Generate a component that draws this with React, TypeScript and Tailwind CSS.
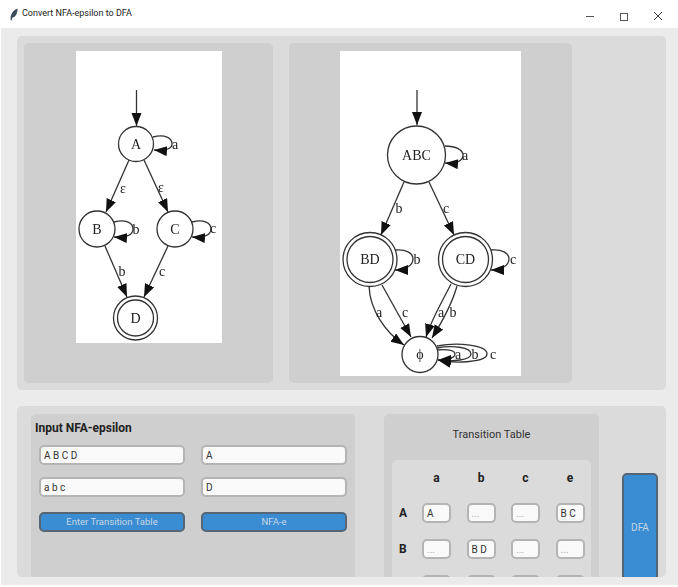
import React from "react";

const serif = { fontFamily: '"Liberation Serif", serif', fontSize: 14, fill: "#222" } as const;

function Defs() {
  return (
    <defs>
      <marker id="head" markerUnits="userSpaceOnUse" markerWidth="16" markerHeight="12" refX="13" refY="5" orient="auto">
        <path d="M0,0 L13,5 L0,10 Z" fill="#111" />
      </marker>
    </defs>
  );
}

function Label({ x, y, t }: { x: number; y: number; t: string }) {
  return (
    <text x={x} y={y} textAnchor="middle" dominantBaseline="central" style={serif}>
      {t}
    </text>
  );
}

function Node({ x, y, r, t, double }: { x: number; y: number; r: number; t: string; double?: number }) {
  return (
    <g>
      <circle cx={x} cy={y} r={r} fill="white" stroke="#333" strokeWidth="1.3" />
      {double ? <circle cx={x} cy={y} r={double} fill="none" stroke="#333" strokeWidth="1.3" /> : null}
      <Label x={x} y={y} t={t} />
    </g>
  );
}

function Edge({ d }: { d: string }) {
  return <path d={d} fill="none" stroke="#333" strokeWidth="1.3" markerEnd="url(#head)" />;
}

function NfaGraph() {
  return (
    <svg width="146" height="292" viewBox="76 51 146 292" className="block bg-white blur-[0.3px]">
      <Defs />
      <Edge d="M136.5,90 L136.5,126" />
      <Node x={136} y={144} r={17.5} t="A" />
      <Edge d="M153,137 C165,134 172,138 172,144 C172,149 165,151 154,150" />
      <Label x={175} y={144} t="a" />
      <Edge d="M129,160 L106,212" />
      <Edge d="M144,160 L168,212" />
      <Label x={123} y={188} t="ε" />
      <Label x={161} y={187} t="ε" />
      <Node x={97} y={229} r={18} t="B" />
      <Node x={175} y={229} r={18} t="C" />
      <Edge d="M114,222 C126,219 133,223 133,229 C133,235 126,238 114,237" />
      <Label x={136} y={229} t="b" />
      <Edge d="M192,222 C204,219 211,223 211,229 C211,235 204,238 192,237" />
      <Label x={213} y={228} t="c" />
      <Edge d="M105,246 L127,297" />
      <Edge d="M168,246 L144,297" />
      <Label x={122} y={271} t="b" />
      <Label x={162} y={271} t="c" />
      <Node x={135.5} y={318} r={22} double={18} t="D" />
    </svg>
  );
}

function DfaGraph() {
  return (
    <svg width="181" height="325" viewBox="340 51 181 325" className="block bg-white blur-[0.3px]">
      <Defs />
      <Edge d="M417,90 L417,125" />
      <Node x={416.5} y={155} r={29} t="ABC" />
      <Edge d="M445,146 C456,146 463,150 463,155 C463,161 456,164 445,163" />
      <Label x={465} y={155} t="a" />
      <Edge d="M404,182 L381,235" />
      <Edge d="M429,182 L454,235" />
      <Label x={399} y={208} t="b" />
      <Label x={446} y={208} t="c" />
      <Node x={370} y={259.5} r={27} double={23} t="BD" />
      <Node x={465.5} y={259.5} r={27} double={23} t="CD" />
      <Edge d="M395,250 C406,249 413,253 413,259 C413,265 406,270 395,270" />
      <Label x={417} y={259} t="b" />
      <Edge d="M491,250 C502,249 509,253 509,259 C509,265 502,270 491,270" />
      <Label x={513} y={259} t="c" />
      <Edge d="M369,286 C370,310 385,332 404,345" />
      <Edge d="M382,285 L411,337" />
      <Edge d="M451,284 C442,302 432,318 426,337" />
      <Edge d="M457,286 C452,304 442,322 432,338" />
      <Label x={379} y={312} t="a" />
      <Label x={405} y={312} t="c" />
      <Label x={441} y={312} t="a" />
      <Label x={453} y={312} t="b" />
      <Node x={420} y={354.5} r={18} t="ϕ" />
      <Edge d="M437,350 C446,349 455,350 455,354 C455,358 447,360 438,360" />
      <Edge d="M437,348 C452,345 471,347 471,354 C471,360 453,362 438,360" />
      <Edge d="M437,346 C458,342 487,345 487,354 C487,362 456,364 438,360" />
      <Label x={458} y={354} t="a" />
      <Label x={475} y={354} t="b" />
      <Label x={493} y={354} t="c" />
    </svg>
  );
}

function Field({ value }: { value: string }) {
  return (
    <div className="flex h-[20px] w-[146px] items-center rounded-[5px] border-2 border-[#b4b4b4] bg-[#f9f9f9] pl-[3px] text-[10px] text-[#333]">
      {value}
    </div>
  );
}

function Action({ label }: { label: string }) {
  return (
    <div className="flex h-[20px] w-[146px] items-center justify-center rounded-[5px] border-2 border-[#566674] bg-[#3a8dd3] text-[9.5px] text-[#c6d6e4]">
      {label}
    </div>
  );
}

function Cell({ value }: { value: string }) {
  const empty = value === "...";
  return (
    <div
      className={`flex h-[20px] w-[29px] items-center rounded-[5px] border-2 border-[#b4b4b4] bg-[#f9f9f9] pl-[3px] text-[10px] ${
        empty ? "text-[#aaaaaa]" : "text-[#333]"
      }`}
    >
      {value}
    </div>
  );
}

const rows = [
  { name: "A", cells: ["A", "...", "...", "B C"] },
  { name: "B", cells: ["...", "B D", "...", "..."] },
  { name: "", cells: ["", "", "", ""] },
];

export default function App() {
  return (
    <div
      className="flex h-[587px] w-[678px] flex-col overflow-hidden bg-white"
      style={{ fontFamily: 'Roboto, "Liberation Sans", sans-serif' }}
    >
      <header className="flex h-[28px] shrink-0 items-center pl-[10px]">
        <svg width="8" height="13" viewBox="0 0 8 13" className="mr-[4px]">
          <path d="M0.8,12.5 C0,8 1.5,3 7.5,0.5 C7.5,5 6,9 2.2,9.8 L1.6,12.5 Z" fill="#3d4a5c" />
        </svg>
        <span className="text-[9px] text-[#222]">Convert NFA-epsilon to DFA</span>
        <div className="ml-auto flex items-center">
          <svg width="12" height="12" viewBox="0 0 12 12" className="mr-[22px] overflow-visible">
            <path d="M2,8.5 H10" stroke="#555" strokeWidth="1" />
          </svg>
          <svg width="12" height="12" viewBox="0 0 12 12" className="mr-[22px] overflow-visible">
            <rect x="2.5" y="5.5" width="7" height="7" fill="none" stroke="#555" strokeWidth="1" />
          </svg>
          <svg width="12" height="12" viewBox="0 0 12 12" className="mr-[14px] overflow-visible">
            <path d="M2,4 L10,12 M10,4 L2,12" stroke="#444" strokeWidth="1" />
          </svg>
        </div>
      </header>

      <main className="ml-[1px] h-[557px] shrink-0 bg-[#ebebeb] pl-[16px] pt-[8px]">
        <section className="flex h-[354px] w-[649px] gap-[16px] rounded-[5px] bg-[#dbdbdb] p-[7px]">
          <div className="h-[340px] w-[249px] rounded-[5px] bg-[#cfcfcf] pl-[52px] pt-[8px]">
            <NfaGraph />
          </div>
          <div className="h-[340px] w-[283px] rounded-[5px] bg-[#cfcfcf] pl-[51px] pt-[8px]">
            <DfaGraph />
          </div>
        </section>

        <section className="mt-[16px] flex h-[171px] w-[649px] overflow-hidden rounded-[5px] bg-[#dbdbdb] pl-[14px] pt-[8px]">
          <div className="h-[230px] w-[324px] shrink-0 rounded-[5px] bg-[#cfcfcf] pt-[7px]">
            <h2 className="pl-[4px] text-[12px] font-bold leading-[14px] text-[#222]">Input NFA-epsilon</h2>
            <div className="mt-[10px] grid grid-cols-[146px_146px] gap-x-[16px] gap-y-[12px] pl-[8px]">
              <Field value="A B C D" />
              <Field value="A" />
              <Field value="a b c" />
              <Field value="D" />
            </div>
            <div className="mt-[15px] flex gap-[16px] pl-[8px]">
              <Action label="Enter Transition Table" />
              <Action label="NFA-e" />
            </div>
          </div>

          <div className="ml-[29px] h-[230px] w-[215px] shrink-0 rounded-[5px] bg-[#cfcfcf] px-[8px] pt-[14px]">
            <h2 className="text-center text-[11px] leading-[14px] text-[#333]">Transition Table</h2>
            <div className="mt-[18px] rounded-[5px] bg-[#dbdbdb] pb-[10px] pl-[30px] pt-[10px]">
              <div className="grid grid-cols-[repeat(4,29px)] gap-x-[15.5px] gap-y-[16px] text-[12px] font-bold text-[#222]">
                {["a", "b", "c", "e"].map((h) => (
                  <div key={h} className="h-[17px] text-center leading-[17px]">
                    {h}
                  </div>
                ))}
                {rows.map((r, ri) => (
                  <React.Fragment key={ri}>
                    {r.cells.map((c, i) => (
                      <div key={i} className="relative font-normal">
                        {i === 0 && r.name ? (
                          <span className="absolute left-[-23px] top-[2px] text-[12px] font-bold leading-[16px] text-[#222]">
                            {r.name}
                          </span>
                        ) : null}
                        <Cell value={c} />
                      </div>
                    ))}
                  </React.Fragment>
                ))}
              </div>
            </div>
          </div>

          <div className="ml-[23px] mt-[59px] flex h-[130px] w-[36px] shrink-0 items-start justify-center rounded-[5px] border-2 border-[#566674] bg-[#3a8dd3] pt-[45px] text-[10px] text-[#c6d6e4]">
            DFA
          </div>
        </section>
      </main>
    </div>
  );
}
